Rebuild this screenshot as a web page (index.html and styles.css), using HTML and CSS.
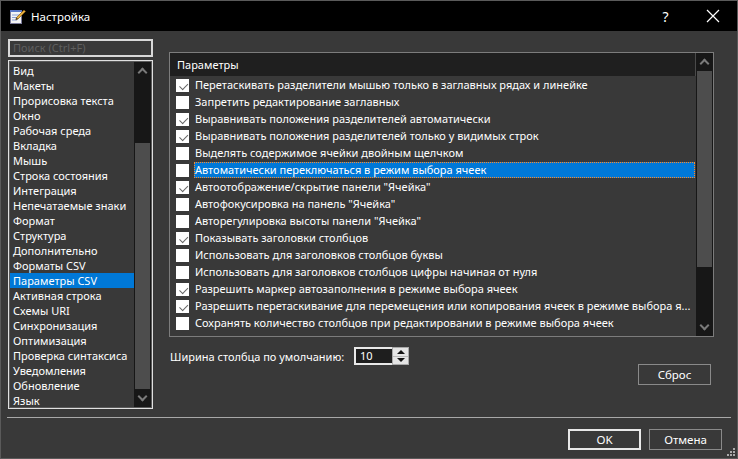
FILE: index.html
```html
<!DOCTYPE html>
<html lang="ru">
<head>
    <meta charset="UTF-8">
    <title>Настройка</title>
    <link rel="stylesheet" href="styles.css">
</head>
<body>
<div class="window">
    <div class="titlebar">
        <svg class="app-icon" width="17" height="17" viewBox="0 0 17 17">
            <rect x="1.5" y="2.5" width="11" height="13" fill="#f4f4f4" stroke="#7a7a9a"/>
            <rect x="1" y="2" width="12" height="2" fill="#5a78c8"/>
            <line x1="3" y1="7" x2="10" y2="7" stroke="#8aa0d8"/>
            <line x1="3" y1="9.5" x2="9" y2="9.5" stroke="#8aa0d8"/>
            <line x1="3" y1="12" x2="8" y2="12" stroke="#8aa0d8"/>
            <path d="M15 2 L16.5 3.5 L9 11 L6.8 11.8 L7.5 9.5 Z" fill="#e8b040" stroke="#8a5a10" stroke-width="0.7"/>
            <path d="M6.8 11.8 L7.5 9.5 L9 11 Z" fill="#333"/>
        </svg>
        <span class="title">Настройка</span>
        <span class="title-btn help">?</span>
        <span class="title-btn close">
            <svg width="14" height="14" viewBox="0 0 14 14"><path d="M1 1 L13 13 M13 1 L1 13" stroke="#fff" stroke-width="1.2"/></svg>
        </span>
    </div>

    <div class="main">
        <div class="sidebar">
            <div class="search">Поиск (Ctrl+F)</div>
            <div class="nav">
                <ul class="nav-list">
                    <li>Вид</li>
                    <li>Макеты</li>
                    <li>Прорисовка текста</li>
                    <li>Окно</li>
                    <li>Рабочая среда</li>
                    <li>Вкладка</li>
                    <li>Мышь</li>
                    <li>Строка состояния</li>
                    <li>Интеграция</li>
                    <li>Непечатаемые знаки</li>
                    <li>Формат</li>
                    <li>Структура</li>
                    <li>Дополнительно</li>
                    <li>Форматы CSV</li>
                    <li class="active">Параметры CSV</li>
                    <li>Активная строка</li>
                    <li>Схемы URI</li>
                    <li>Синхронизация</li>
                    <li>Оптимизация</li>
                    <li>Проверка синтаксиса</li>
                    <li>Уведомления</li>
                    <li>Обновление</li>
                    <li>Язык</li>
                </ul>
                <div class="scrollbar nav-scroll">
                    <div class="arrow up"></div>
                    <div class="track"><div class="thumb"></div></div>
                    <div class="arrow down"></div>
                </div>
            </div>
        </div>

        <div class="content">
            <div class="panel">
                <div class="panel-body">
                    <div class="panel-header">Параметры</div>
                    <div class="option checked">Перетаскивать разделители мышью только в заглавных рядах и линейке</div>
                    <div class="option">Запретить редактирование заглавных</div>
                    <div class="option checked">Выравнивать положения разделителей автоматически</div>
                    <div class="option checked">Выравнивать положения разделителей только у видимых строк</div>
                    <div class="option">Выделять содержимое ячейки двойным щелчком</div>
                    <div class="option selected"><span class="label">Автоматически переключаться в режим выбора ячеек</span></div>
                    <div class="option checked">Автоотображение/скрытие панели "Ячейка"</div>
                    <div class="option">Автофокусировка на панель "Ячейка"</div>
                    <div class="option">Авторегулировка высоты панели "Ячейка"</div>
                    <div class="option checked">Показывать заголовки столбцов</div>
                    <div class="option">Использовать для заголовков столбцов буквы</div>
                    <div class="option">Использовать для заголовков столбцов цифры начиная от нуля</div>
                    <div class="option checked">Разрешить маркер автозаполнения в режиме выбора ячеек</div>
                    <div class="option checked">Разрешить перетаскивание для перемещения или копирования ячеек в режиме выбора я...</div>
                    <div class="option">Сохранять количество столбцов при редактировании в режиме выбора ячеек</div>
                </div>
                <div class="scrollbar panel-scroll">
                    <div class="arrow up"></div>
                    <div class="track"><div class="thumb"></div></div>
                    <div class="arrow down"></div>
                </div>
            </div>

            <div class="width-row">
                <span class="width-label">Ширина столбца по умолчанию:</span>
                <div class="spinner">
                    <span class="spin-value">10</span>
                    <div class="spin-buttons">
                        <div class="spin-btn"><span class="tri up"></span></div>
                        <div class="spin-btn"><span class="tri down"></span></div>
                    </div>
                </div>
            </div>

            <div class="reset-row">
                <button class="btn">Сброс</button>
            </div>
        </div>
    </div>

    <div class="separator"></div>

    <div class="footer">
        <button class="btn default">OK</button>
        <button class="btn">Отмена</button>
        <svg class="grip" width="9" height="9" viewBox="0 0 9 9">
            <rect x="6" y="0" width="2" height="2" fill="#aaa"/>
            <rect x="3" y="3" width="2" height="2" fill="#aaa"/>
            <rect x="6" y="3" width="2" height="2" fill="#aaa"/>
            <rect x="0" y="6" width="2" height="2" fill="#aaa"/>
            <rect x="3" y="6" width="2" height="2" fill="#aaa"/>
            <rect x="6" y="6" width="2" height="2" fill="#aaa"/>
        </svg>
    </div>
</div>
</body>
</html>
```

FILE: styles.css
```css
* {
    box-sizing: border-box;
}
body {
    margin: 0;
    background: #393939;
    font-family: "Noto Sans", "Open Sans", sans-serif;
    font-size: 11px;
    color: #fff;
}
.window {
    width: 738px;
    height: 459px;
    border: 1px solid #5a5a5a;
    background: #393939;
    position: relative;
}

/* title bar */
.titlebar {
    height: 30px;
    background: #000;
    display: flex;
    align-items: center;
    padding-left: 8px;
}
.app-icon {
    margin-right: 5px;
}
.title {
    flex: 1;
    font-size: 11.5px;
}
.title-btn {
    width: 45px;
    text-align: center;
    font-size: 14px;
    display: flex;
    justify-content: center;
}
.help {
    margin-right: 2px;
}
.close {
    margin-right: 2px;
}

/* main area */
.main {
    display: flex;
    padding: 8px 0 0 7px;
    height: 386px;
}
.sidebar {
    width: 145px;
    display: flex;
    flex-direction: column;
}
.search {
    height: 18px;
    border: 2px solid #d8d8d8;
    color: #5f5f5f;
    padding-left: 3px;
    line-height: 14px;
    margin-bottom: 3px;
}
.nav {
    height: 349px;
    border: 1px solid #e0e0e0;
    box-shadow: inset 0 0 0 1px #5a5a5a;
    display: flex;
    padding: 1px;
}
.nav-list {
    list-style: none;
    margin: 0;
    padding: 1px 0 0 0;
    flex: 1;
    overflow: hidden;
}
.nav-list li {
    height: 15px;
    line-height: 15px;
    padding-left: 3px;
    white-space: nowrap;
}
.nav-list li.active {
    background: #0078d7;
}

/* scrollbars */
.scrollbar {
    width: 17px;
    background: #171717;
    display: flex;
    flex-direction: column;
}
.scrollbar .arrow {
    height: 17px;
    position: relative;
}
.scrollbar .arrow::before {
    content: "";
    position: absolute;
    left: 5px;
    width: 5px;
    height: 5px;
    border-left: 2px solid #7a7a7a;
    border-top: 2px solid #7a7a7a;
}
.scrollbar .arrow.up::before {
    top: 7px;
    transform: rotate(45deg);
}
.scrollbar .arrow.down::before {
    top: 3px;
    transform: rotate(-135deg);
}
.scrollbar .track {
    flex: 1;
    position: relative;
}
.scrollbar .thumb {
    position: absolute;
    left: 1px;
    right: 1px;
    background: #4d4d4d;
}
.nav-scroll .track .thumb {
    top: 64px;
    height: 246px;
}
.panel-scroll .track .thumb {
    top: 1px;
    height: 196px;
}

/* content */
.content {
    margin-left: 16px;
    padding-top: 13px;
    width: 545px;
    display: flex;
    flex-direction: column;
}
.panel {
    height: 285px;
    border: 1px solid #7c7c7c;
    display: flex;
}
.panel-body {
    flex: 1;
    overflow: hidden;
}
.panel-header {
    height: 23px;
    line-height: 23px;
    background: #1f1f1f;
    padding-left: 7px;
    border-right: 1px solid #4a4a4a;
    margin-bottom: 1px;
}
.option {
    height: 17px;
    line-height: 16px;
    padding-left: 25px;
    position: relative;
    white-space: nowrap;
}
.option::before {
    content: "";
    position: absolute;
    left: 6px;
    top: 2px;
    width: 13px;
    height: 13px;
    background: #fff;
}
.option.checked::after {
    content: "";
    position: absolute;
    left: 9px;
    top: 4px;
    width: 7px;
    height: 4px;
    border-left: 1.5px solid #666;
    border-bottom: 1.5px solid #666;
    transform: rotate(-45deg) translate(-1px, 2px);
}
.option.selected .label {
    display: block;
    margin-left: -1px;
    padding-left: 1px;
    background: #0078d7;
    outline: 1px dotted #ff8a28;
    outline-offset: -1px;
    margin-right: 1px;
}

/* column width */
.width-row {
    display: flex;
    align-items: center;
    margin-top: 10px;
    padding-left: 1px;
    height: 18px;
}
.width-label {
    width: 184px;
    white-space: nowrap;
}
.spinner {
    display: flex;
    height: 18px;
}
.spin-value {
    width: 38px;
    border: 2px solid #e8e8e8;
    border-right: none;
    background: #1e1e1e;
    padding-left: 4px;
    line-height: 14px;
}
.spin-buttons {
    width: 17px;
    background: #e4e4e4;
    border: 1px solid #a8a8a8;
    display: flex;
    flex-direction: column;
}
.spin-btn {
    flex: 1;
    display: flex;
    align-items: center;
    justify-content: center;
    border-bottom: 1px solid #b8b8b8;
}
.spin-btn:last-child {
    border-bottom: none;
}
.tri {
    width: 0;
    height: 0;
    border-left: 4px solid transparent;
    border-right: 4px solid transparent;
}
.tri.up {
    border-bottom: 4px solid #111;
}
.tri.down {
    border-top: 4px solid #111;
}

.reset-row {
    display: flex;
    justify-content: flex-end;
    margin-top: -1px;
    padding-right: 3px;
}

/* buttons */
.btn {
    width: 73px;
    height: 21px;
    background: #393939;
    border: 1px solid #8a8a8a;
    color: #fff;
    font-family: "Noto Sans", "Open Sans", sans-serif;
    font-size: 11.5px;
    padding: 0;
}
.btn.default {
    border: 2px solid #e8e8e8;
}

.separator {
    height: 1px;
    background: #a8a8a8;
    margin: 0 6px 0 6px;
}
.footer {
    display: flex;
    justify-content: flex-end;
    gap: 8px;
    padding: 11px 15px 0 0;
}
.grip {
    position: absolute;
    right: 1px;
    bottom: 1px;
}
```
